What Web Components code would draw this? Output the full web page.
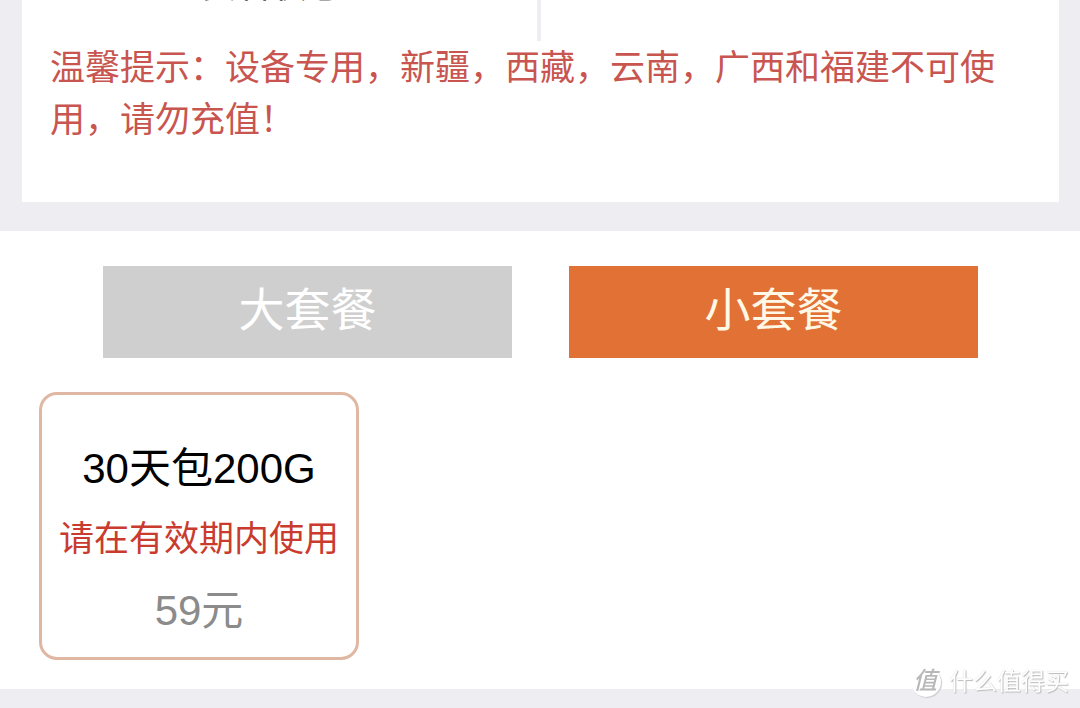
<!DOCTYPE html>
<html lang="zh-CN">
<head>
<meta charset="utf-8">
<meta name="viewport" content="width=device-width, initial-scale=1">
<title>套餐充值</title>
<style>
html, body { margin: 0; min-height: 100%; }
body { background: #eeedf2; font-family: "Liberation Sans", "Noto Sans CJK SC", sans-serif; }
</style>
</head>
<body>
<recharge-page></recharge-page>
<script>
function define(name, html, setup) {
  const template = document.createElement('template');
  template.innerHTML = html;
  customElements.define(name, class extends HTMLElement {
    constructor() {
      super();
      this.attachShadow({ mode: 'open' }).append(template.content.cloneNode(true));
    }
    connectedCallback() { if (setup) setup(this); }
  });
}

define('status-row', `
<style>
:host { display: grid; grid-template-columns: 1fr 1fr; height: 41px; overflow: hidden; }
.cell { display: flex; justify-content: center; border-right: 4px solid #eeedf2; padding-right: 16px; }
.label { display: flex; align-items: flex-end; height: 3px; font-size: 35px; line-height: 35px; color: #666; }
</style>
<div class="cell"><span class="label"><slot></slot></span></div>`);

define('info-panel', `
<style>
:host { display: block; margin: 0 21px 29px 22px; background: #fff; }
.notice { margin: 0; padding: 1px 28px 56px; font-size: 35px; line-height: 52px; color: #c8554f; }
</style>
<slot name="status"></slot>
<p class="notice"><slot></slot></p>`);

define('plan-tab', `
<style>
:host { display: block; }
button { display: block; width: 100%; margin: 0; padding: 0 0 4px; border: 0; border-radius: 0; background: #cfcfcf; color: #fff; font: inherit; font-size: 46px; line-height: 88px; cursor: pointer; }
:host([selected]) button { background: #e27135; color: #fff8e6; }
</style>
<button type="button" role="tab"><slot></slot></button>`, el => {
  el.shadowRoot.querySelector('button').setAttribute('aria-selected', el.hasAttribute('selected'));
});

define('plan-tabs', `
<style>
:host { display: grid; grid-template-columns: 1fr 1fr; gap: 57px; padding: 0 102px 0 103px; }
</style>
<slot></slot>`);

define('plan-card', `
<style>
:host { display: block; width: 320px; }
button { display: block; box-sizing: border-box; width: 100%; margin: 0; padding: 40px 0 10px; border: 3px solid #dfb7a3; border-radius: 18px; background: #fff; font: inherit; text-align: center; white-space: nowrap; cursor: pointer; }
span { display: block; line-height: 72px; }
.name { font-size: 42px; color: #000; line-height: 68px; }
.hint { font-size: 35px; color: #c93b2e; }
.price { font-size: 42px; color: #8b8b8b; }
</style>
<button type="button">
<span class="name"><slot></slot></span>
<span class="hint"><slot name="hint"></slot></span>
<span class="price"><slot name="price"></slot></span>
</button>`);

define('site-mark', `
<style>
:host { position: fixed; right: 11px; bottom: 9px; display: flex; align-items: center; gap: 8px; font-size: 24px; line-height: 34px; color: #fff; text-shadow: 1px 1px 1px #bbb, 0 0 1px #ccc; }
.badge { display: flex; justify-content: center; padding-right: 2px; box-sizing: border-box; width: 30px; height: 30px; border-radius: 50%; background: #fff; color: #b8b8b8; text-shadow: none; box-shadow: 1px 1px 1px #ccc; font-size: 24px; font-weight: 500; line-height: 28px; font-style: italic; }
</style>
<span class="badge">值</span><span><slot></slot></span>`);

define('recharge-page', `
<style>
:host { display: block; }
.plans { padding: 35px 0 29px; background: #fff; }
.cards { display: flex; flex-wrap: wrap; gap: 20px; padding: 34px 39px 0; }
</style>
<info-panel>
<status-row slot="status">实名状态</status-row>温馨提示：设备专用，新疆，西藏，云南，广西和福建不可使用，请勿充值！</info-panel>
<section class="plans">
<plan-tabs role="tablist"><plan-tab>大套餐</plan-tab><plan-tab selected>小套餐</plan-tab></plan-tabs>
<div class="cards"><plan-card>30天包200G<span slot="hint">请在有效期内使用</span><span slot="price">59元</span></plan-card></div>
</section>
<site-mark>什么值得买</site-mark>`);
</script>
</body>
</html>
